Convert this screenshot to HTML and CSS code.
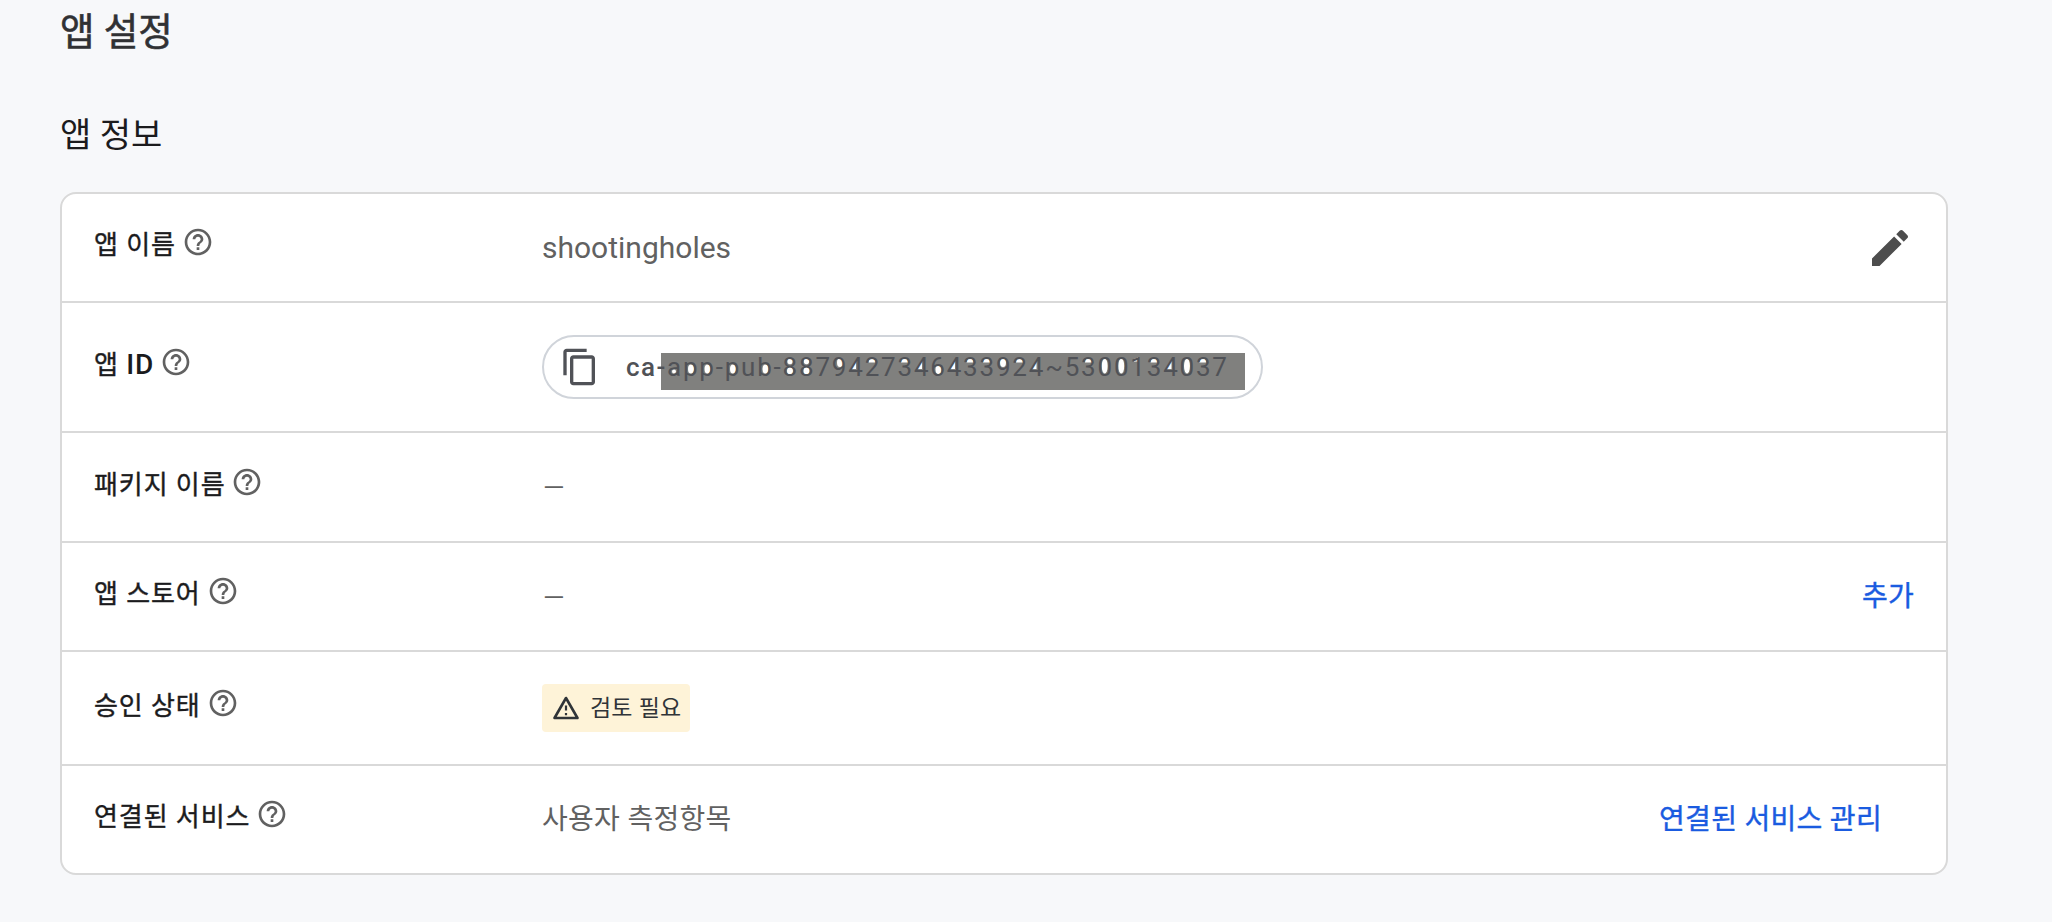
FILE: index.html
```html
<!DOCTYPE html>
<html lang="ko">
  <head>
    <meta charset="UTF-8" />
    <meta name="viewport" content="width=device-width, initial-scale=1.0" />
    <title>앱 설정</title>
    <link rel="stylesheet" href="styles.css">
  </head>
  <body>
    <!-- shared icon -->
    <svg class="sprite" xmlns="http://www.w3.org/2000/svg">
      <symbol id="help" viewBox="0 0 24 24">
        <path d="M11 18h2v-2h-2v2zm1-16C6.480 2 2 6.480 2 12s4.480 10 10 10 10-4.480 10-10S17.520 2 12 2zm0 18c-4.410 0-8-3.590-8-8s3.590-8 8-8 8 3.590 8 8-3.590 8-8 8zm0-14c-2.210 0-4 1.790-4 4h2c0-1.100.9-2 2-2s2 .9 2 2c0 2-3 1.750-3 5h2c0-2.250 3-2.500 3-5 0-2.210-1.790-4-4-4z" />
      </symbol>
    </svg>
    <main class="page">
      <h1 class="title">앱 설정</h1>
      <h2 class="subtitle">앱 정보</h2>

      <section class="card">
        <div class="row row-name">
          <div class="label">앱 이름<svg class="help"><use href="#help" /></svg></div>
          <div class="value">shootingholes</div>
          <button type="button" class="edit" aria-label="수정">
            <svg viewBox="0 0 24 24" fill="currentColor">
              <path d="M3 17.250V21h3.750L17.810 9.940l-3.750-3.750L3 17.250zM20.710 7.040c.39-.39.39-1.020 0-1.410l-2.340-2.340c-.39-.39-1.020-.39-1.410 0l-1.830 1.830 3.750 3.750 1.830-1.830z" />
            </svg>
          </button>
        </div>

        <div class="row row-id">
          <div class="label"><span>앱 <span class="latin">ID</span></span><svg class="help"><use href="#help" /></svg></div>
          <div class="chip">
            <svg class="copy" viewBox="0 0 24 24" fill="currentColor">
              <path d="M16 1H4c-1.100 0-2 .9-2 2v14h2V3h12V1zm3 4H8c-1.100 0-2 .9-2 2v14c0 1.100.9 2 2 2h11c1.100 0 2-.9 2-2V7c0-1.100-.9-2-2-2zm0 16H8V7h11v14z" />
            </svg>
            <!-- grey bar behind the id, light spots sit inside the characters -->
            <svg class="mask" viewBox="0 0 584 37">
              <defs>
                <ellipse id="bowl" rx="3" ry="4.500" />
                <ellipse id="zero" rx="3" ry="7.500" />
                <path id="four" d="M-5.500 3.500 0-5v8.500Z" />
                <path id="arc" d="M-3.500 2C-3.500-4 3.500-4 3.500 2Z" />
                <g id="eight">
                  <ellipse cy="-5" rx="2.700" ry="3.300" />
                  <ellipse cy="5" rx="3" ry="4" />
                </g>
              </defs>
              <rect width="584" height="37" fill="#80807e" />
              <g fill="white">
                <ellipse cx="13" cy="18.500" rx="2" ry="2" />
                <use href="#bowl" x="30" y="16" />
                <use href="#bowl" x="46.500" y="16" />
                <use href="#bowl" x="72" y="16" />
                <use href="#bowl" x="104.500" y="16" />
                <use href="#eight" x="129" y="13" />
                <use href="#eight" x="145.500" y="13" />
                <use href="#bowl" x="179" y="9.500" />
                <use href="#four" x="195" y="12.500" />
                <use href="#arc" x="211" y="7.500" />
                <use href="#arc" x="243.500" y="7.500" />
                <use href="#four" x="261" y="12.500" />
                <use href="#bowl" x="277.500" y="16.500" />
                <use href="#four" x="294" y="12.500" />
                <use href="#arc" x="309" y="7.500" />
                <use href="#arc" x="325.500" y="7.500" />
                <use href="#bowl" x="342" y="9.500" />
                <use href="#arc" x="358.500" y="7.500" />
                <use href="#four" x="375.500" y="12.500" />
                <use href="#arc" x="427.500" y="7.500" />
                <use href="#zero" x="443.700" y="13" />
                <use href="#zero" x="460.300" y="13" />
                <path d="M473 8.500v-2.500l4-1.500v4Z" />
                <use href="#arc" x="493" y="7.500" />
                <use href="#four" x="510.500" y="12.500" />
                <use href="#zero" x="526" y="13" />
                <use href="#arc" x="541.700" y="7.500" />
              </g>
            </svg>
            <span class="app-id">ca-<span class="masked">app-pub-8879427346433924~5300134037</span></span>
          </div>
        </div>

        <div class="row row-package">
          <div class="label">패키지 이름<svg class="help"><use href="#help" /></svg></div>
          <div class="value dash">–</div>
        </div>

        <div class="row row-store">
          <div class="label">앱 스토어<svg class="help"><use href="#help" /></svg></div>
          <div class="value dash">–</div>
          <a class="link">추가</a>
        </div>

        <div class="row row-status">
          <div class="label">승인 상태<svg class="help"><use href="#help" /></svg></div>
          <div class="badge">
            <svg class="warn" viewBox="0 0 26 24" fill="none" stroke="currentColor">
              <path stroke-width="2.600" stroke-linejoin="round" d="M13 2 24.500 22h-23Z" />
              <path stroke-width="2.200" d="M13 9.500v5M13 17v2.200" />
            </svg>
            <span class="badge-text">검토 필요</span>
          </div>
        </div>

        <div class="row row-services">
          <div class="label">연결된 서비스<svg class="help"><use href="#help" /></svg></div>
          <div class="value value-ko">사용자 측정항목</div>
          <a class="link link-manage">연결된 서비스 관리</a>
        </div>
      </section>
    </main>
  </body>
</html>
```

FILE: styles.css
```css
:root {
  --border: #d9d9d9;
  --text: #1b1b1d;
  --muted: #616161;
  --link: #1a5be0;
}

* {
  box-sizing: border-box;
}

body {
  margin: 0;
  background-color: #f7f8fa;
  color: var(--text);
  font-family: Roboto, "Noto Sans CJK KR", sans-serif;
}

.sprite {
  display: none;
}

.page {
  padding: 7px 104px 0 60px;
}

.title {
  margin: 0;
  height: 50px;
  font-size: 37.500px;
  font-weight: 400;
  line-height: 50px;
  color: #303134;
  -webkit-text-stroke: 0.600px;
}

.subtitle {
  margin: 56px 0 35px;
  height: 44px;
  font-size: 34px;
  font-weight: 400;
  line-height: 44px;
}

.card {
  background-color: white;
  border: 2px solid var(--border);
  border-radius: 16px;
}

.row {
  display: flex;
  align-items: center;
  height: 109px;
  padding: 0 32px;
  border-bottom: 2px solid var(--border);
}

.row-id {
  height: 130px;
}

.row-package {
  height: 110px;
}

.row-status {
  height: 114px;
}

.row-services {
  height: 107px;
  border-bottom: none;
}

.label {
  display: flex;
  align-items: center;
  width: 448px;
  padding-bottom: 5px;
  font-size: 26px;
  letter-spacing: 0.900px;
  line-height: 40px;
  -webkit-text-stroke: 0.400px;
}

.latin {
  font-size: 28px;
  font-weight: 500;
  -webkit-text-stroke: 0;
}

.help {
  width: 32px;
  height: 32px;
  margin: -6px 0 0 6px;
  fill: var(--muted);
  -webkit-text-stroke: 0;
}

.value {
  font-size: 30px;
  line-height: 40px;
  color: var(--muted);
}

.dash {
  padding-top: 2px;
  font-size: 37px;
  font-weight: 300;
}

.value-ko {
  font-size: 28px;
  letter-spacing: 0.300px;
}

.edit {
  margin-left: auto;
  width: 48px;
  height: 48px;
  padding: 0;
  border: none;
  background: none;
  color: #4d4d4d;
}

.edit svg {
  display: block;
  width: 48px;
  height: 48px;
}

.chip {
  position: relative;
  display: flex;
  align-items: center;
  width: 721px;
  height: 64px;
  padding-left: 16px;
  border: 2px solid #d0d4da;
  border-radius: 32px;
  color: #505257;
}

.copy {
  width: 40px;
  height: 40px;
}

.mask {
  position: absolute;
  top: 16px;
  left: 117px;
  width: 584px;
  height: 37px;
}

.app-id {
  position: relative;
  margin-left: 26px;
  font-size: 26px;
  font-weight: 500;
  letter-spacing: 1.500px;
  white-space: nowrap;
}

.masked {
  font-weight: 400;
  letter-spacing: 1.800px;
}

.badge {
  display: flex;
  align-items: center;
  gap: 11px;
  width: 148px;
  height: 48px;
  padding-left: 11px;
  border-radius: 4px;
  background-color: #fef3d8;
  color: #303438;
}

.badge-text {
  padding-bottom: 4px;
  font-size: 23px;
  letter-spacing: 0.200px;
}

.warn {
  width: 26px;
  height: 24px;
}

.link {
  margin-left: auto;
  padding-bottom: 5px;
  font-size: 28px;
  letter-spacing: 0.300px;
  color: var(--link);
  -webkit-text-stroke: 0.400px;
}

.link-manage {
  margin-right: 32px;
}
```
